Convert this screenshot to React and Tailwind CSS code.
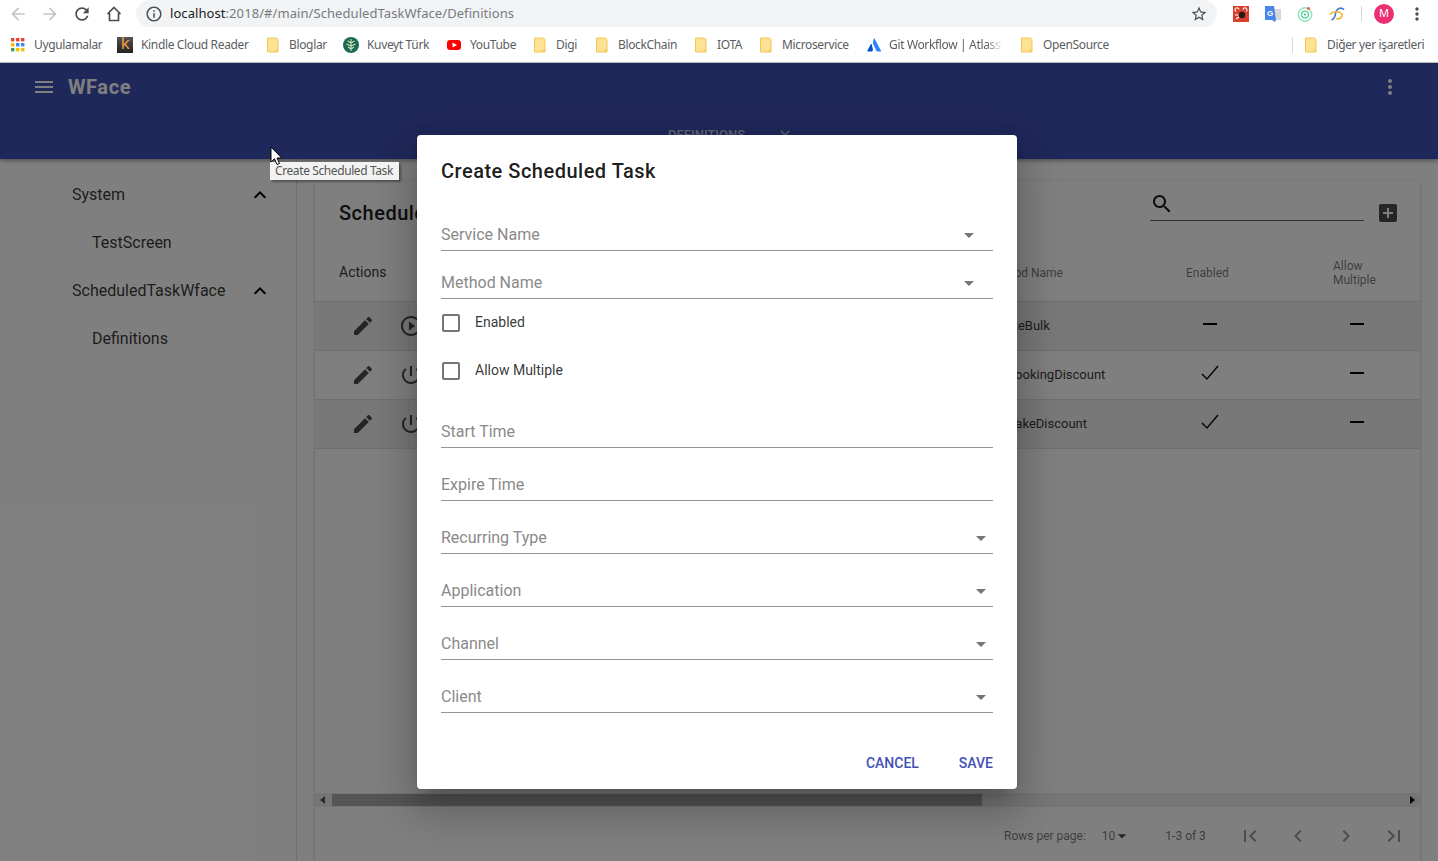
import React from 'react';

const Mi = ({ d, className = '' }) => (
  <svg viewBox="0 0 24 24" className={className} fill="currentColor">
    <path d={d} />
  </svg>
);

const icons = {
  menu: 'M3 18h18v-2H3v2zm0-5h18v-2H3v2zm0-7v2h18V6H3z',
  more: 'M12 8c1.1 0 2-.9 2-2s-.9-2-2-2-2 .9-2 2 .9 2 2 2zm0 2c-1.1 0-2 .9-2 2s.9 2 2 2 2-.9 2-2-.9-2-2-2zm0 6c-1.1 0-2 .9-2 2s.9 2 2 2 2-.9 2-2-.9-2-2-2z',
  less: 'M12 8l-6 6 1.41 1.41L12 10.83l4.59 4.58L18 14z',
  edit: 'M3 17.25V21h3.75L17.81 9.94l-3.75-3.75L3 17.25zM20.71 7.04c.39-.39.39-1.02 0-1.41l-2.34-2.34c-.39-.39-1.02-.39-1.41 0l-1.83 1.83 3.75 3.75 1.83-1.83z',
  play: 'M10 16.5l6-4.5-6-4.5v9zM12 2C6.48 2 2 6.48 2 12s4.48 10 10 10 10-4.48 10-10S17.52 2 12 2zm0 18c-4.41 0-8-3.59-8-8s3.59-8 8-8 8 3.59 8 8-3.59 8-8 8z',
  power: 'M13 3h-2v10h2V3zm4.83 2.17l-1.42 1.42C17.99 7.86 19 9.81 19 12c0 3.87-3.13 7-7 7s-7-3.13-7-7c0-2.19 1.01-4.14 2.58-5.42L6.17 5.17C4.23 6.82 3 9.26 3 12c0 4.97 4.03 9 9 9s9-4.03 9-9c0-2.74-1.23-5.18-3.17-6.83z',
  search: 'M15.5 14h-.79l-.28-.27C15.41 12.59 16 11.11 16 9.5 16 5.91 13.09 3 9.5 3S3 5.91 3 9.5 5.91 16 9.5 16c1.61 0 3.09-.59 4.23-1.57l.27.28v.79l5 4.99L20.49 19l-4.99-5zm-6 0C7.01 14 5 11.99 5 9.5S7.01 5 9.5 5 14 7.01 14 9.5 11.99 14 9.5 14z',
  addBox: 'M19 3H5c-1.11 0-2 .9-2 2v14c0 1.1.89 2 2 2h14c1.1 0 2-.9 2-2V5c0-1.1-.9-2-2-2zm-2 10h-4v4h-2v-4H7v-2h4V7h2v4h4v2z',
  first: 'M18.41 16.59L13.82 12l4.59-4.59L17 6l-6 6 6 6zM6 6h2v12H6z',
  prev: 'M15.41 7.41L14 6l-6 6 6 6 1.41-1.41L10.83 12z',
  next: 'M10 6L8.59 7.41 13.17 12l-4.58 4.59L10 18l6-6z',
  last: 'M5.59 7.41L10.18 12l-4.59 4.59L7 18l6-6-6-6zM16 6h2v12h-2z',
  box: 'M19 5v14H5V5h14m0-2H5c-1.1 0-2 .9-2 2v14c0 1.1.9 2 2 2h14c1.1 0 2-.9 2-2V5c0-1.1-.9-2-2-2z',
  drop: 'M7 10l5 5 5-5z',
  close: 'M19 6.41L17.59 5 12 10.59 6.41 5 5 6.41 10.59 12 5 17.59 6.41 19 12 13.41 17.59 19 19 17.59 13.41 12z',
  back: 'M20 11H7.83l5.59-5.59L12 4l-8 8 8 8 1.41-1.41L7.83 13H20v-2z',
  forward: 'M12 4l-1.41 1.41L16.17 11H4v2h12.17l-5.58 5.59L12 20l8-8z',
  reload: 'M17.65 6.35C16.2 4.9 14.21 4 12 4c-4.42 0-7.99 3.58-7.99 8s3.57 8 7.99 8c3.73 0 6.84-2.55 7.73-6h-2.08c-.82 2.33-3.04 4-5.65 4-3.31 0-6-2.69-6-6s2.69-6 6-6c1.66 0 3.14.69 4.22 1.78L13 11h7V4l-2.35 2.35z',
  info: 'M11 7h2v2h-2zm0 4h2v6h-2zm1-9C6.48 2 2 6.48 2 12s4.48 10 10 10 10-4.48 10-10S17.52 2 12 2zm0 18c-4.41 0-8-3.59-8-8s3.59-8 8-8 8 3.59 8 8-3.59 8-8 8z',
  star: 'M22 9.24l-7.19-.62L12 2 9.19 8.63 2 9.24l5.46 4.73L5.82 21 12 17.27 18.18 21l-1.63-7.03L22 9.24zM12 15.4l-3.76 2.27 1-4.28-3.32-2.88 4.38-.38L12 6.1l1.71 4.04 4.38.38-3.32 2.88 1 4.28L12 15.4z',
};

const Folder = () => (
  <svg viewBox="0 0 16 16" className="w-4 h-4 shrink-0">
    <path d="M2.5 1h9l1.5 1.5V15H2.5z" fill="#fde293" stroke="#f0c755" strokeWidth="1" />
    <path d="M11 15v-2h2" fill="none" stroke="#f0c755" strokeWidth="1" />
  </svg>
);

const AppsGrid = () => (
  <svg viewBox="0 0 14 14" className="w-[14px] h-[14px] shrink-0">
    {[
      ['#ea4335', '#ea4335', '#ea4335'],
      ['#fbbc04', '#4285f4', '#4285f4'],
      ['#34a853', '#fbbc04', '#fbbc04'],
    ].map((row, y) =>
      row.map((color, x) => <rect key={`${x}-${y}`} x={x * 5} y={y * 5} width="3.4" height="3.4" fill={color} />)
    )}
  </svg>
);

const Kindle = () => (
  <span className="w-4 h-4 shrink-0 bg-gradient-to-b from-[#555] to-[#222] text-[#ee9a3a] text-[17px] leading-[14px] text-center font-['Liberation_Sans',sans-serif]">
    k
  </span>
);

const Kuveyt = () => (
  <svg viewBox="0 0 16 16" className="w-4 h-4 shrink-0">
    <circle cx="8" cy="8" r="8" fill="#1d6a52" />
    <path d="M8 2v12M8 6L4.5 4M8 6l3.5-2M8 9L3.5 7M8 9l4.5-2M8 12l-3-2M8 12l3-2" stroke="#cfe0b8" strokeWidth="1.1" fill="none" />
  </svg>
);

const YouTube = () => (
  <svg viewBox="0 0 16 16" className="w-4 h-4 shrink-0">
    <rect x="1" y="3" width="14" height="10" rx="3" fill="#f00" />
    <path d="M6.5 5.5L11 8l-4.5 2.5z" fill="#fff" />
  </svg>
);

const Atlassian = () => (
  <svg viewBox="0 0 16 16" className="w-4 h-4 shrink-0">
    <path d="M8.2 1c-1.6 3-1.6 5.6 0 8.3L10.8 14.5H15.4z" fill="#2684ff" />
    <path d="M4.6 7.4L1 14.5h5.2L7 12.4c-.5-1.6-.9-3.3-1.2-5-.3-.6-.9-.6-1.2 0z" fill="#0052cc" />
  </svg>
);

const bookmarks = [
  { label: 'Uygulamalar', icon: <AppsGrid />, width: 'w-[107px]', gap: 'gap-[9px] pl-[1px]' },
  { label: 'Kindle Cloud Reader', icon: <Kindle />, width: 'w-[148px]', gap: 'gap-2' },
  { label: 'Bloglar', icon: <Folder />, width: 'w-[78px]', gap: 'gap-2' },
  { label: 'Kuveyt Türk', icon: <Kuveyt />, width: 'w-[103px]', gap: 'gap-2' },
  { label: 'YouTube', icon: <YouTube />, width: 'w-[86px]', gap: 'gap-2' },
  { label: 'Digi', icon: <Folder />, width: 'w-[62px]', gap: 'gap-2' },
  { label: 'BlockChain', icon: <Folder />, width: 'w-[99px]', gap: 'gap-2' },
  { label: 'IOTA', icon: <Folder />, width: 'w-[65px]', gap: 'gap-2' },
  { label: 'Microservice', icon: <Folder />, width: 'w-[108px]', gap: 'gap-2' },
];

const BrowserChrome = () => (
  <div className="h-[63px] bg-white border-b border-[#c4c4c4] font-['Noto_Sans',sans-serif]">
    <div className="h-[27px] flex items-center">
      <div className="flex items-center w-[136px] pl-[8px] gap-[12px] text-[#5f6368]">
        <Mi d={icons.back} className="w-5 h-5 text-[#c3c5c8]" />
        <Mi d={icons.forward} className="w-5 h-5 text-[#c3c5c8]" />
        <Mi d={icons.reload} className="w-5 h-5 text-[#4a4d51]" />
        <svg viewBox="0 0 20 20" className="w-5 h-5 text-[#4a4d51]" fill="none" stroke="currentColor" strokeWidth="1.7">
          <path d="M3.5 10L10 3.5 16.5 10M5.5 9v7.5h9V9" />
        </svg>
      </div>
      <div className="w-[1081px] h-[27px] bg-[#f1f3f4] rounded-[14px] flex items-center pl-[9px] pr-[9px]">
        <Mi d={icons.info} className="w-[18px] h-[18px] text-[#4a4d51] shrink-0" />
        <span className="ml-[7px] text-[13px] text-[#777b80] whitespace-nowrap tracking-[0.07px]">
          <span className="text-[#202124]">localhost</span>:2018/#/main/ScheduledTaskWface/Definitions
        </span>
        <Mi d={icons.star} className="ml-auto w-[18px] h-[18px] text-[#4a4d51] shrink-0" />
      </div>
      <div className="flex items-center pl-4 gap-4">
        <svg viewBox="0 0 16 16" className="w-4 h-4">
          <rect width="16" height="16" fill="#d8402c" />
          <circle cx="9" cy="9" r="3.2" fill="#2b1a16" />
          <path d="M3 5.5a2 2 0 1 1 3-2M13 5.5a2 2 0 1 0-3-2M2 9h3.5M3 13l3-2" stroke="#fff" strokeWidth="1.1" fill="none" />
        </svg>
        <svg viewBox="0 0 16 16" className="w-4 h-4">
          <rect x="6" y="3" width="10" height="11" fill="#d5d8dc" />
          <path d="M0 0h9l2 14-1 2-3-2H0z" fill="#4a86e8" />
          <text x="2" y="9.5" fontSize="8" fill="#fff" fontFamily="Liberation Sans" fontWeight="700">G</text>
        </svg>
        <svg viewBox="0 0 16 16" className="w-4 h-4" fill="none">
          <circle cx="8" cy="8.5" r="6.7" stroke="#8fe6c0" strokeWidth="1.5" />
          <circle cx="8" cy="8.5" r="3.4" stroke="#4fd09a" strokeWidth="1.3" />
          <circle cx="8" cy="8.5" r="1" fill="#2bb673" />
          <circle cx="11.5" cy="2.5" r="1.5" fill="#ef5a3c" />
        </svg>
        <svg viewBox="0 0 16 16" className="w-4 h-4" fill="none" strokeWidth="1.7">
          <path d="M15 3.5C11 .5 7 3 6.5 7.5 6.2 10.5 5 13 2.5 14" stroke="#3f7fd0" />
          <path d="M1 8.5C3.5 5.5 8 5.5 11 6.5c2.5.8 3 3.5.5 5.5-1.5 1-3 1-4.5.5" stroke="#f2b632" />
        </svg>
        <div className="w-px h-4 bg-[#d8d8d8]" />
        <div className="w-5 h-5 -ml-[4px] rounded-full bg-[#ec2f72] text-white text-[11px] flex items-center justify-center">M</div>
        <Mi d={icons.more} className="w-5 h-5 text-[#4a4d51] -ml-[3px]" />
      </div>
    </div>
    <div className="h-[35px] flex items-center pl-[10px] text-[12px] text-[#5a5d61] whitespace-nowrap tracking-[-0.35px]">
      {bookmarks.map((b) => (
        <div key={b.label} className={`flex items-center shrink-0 ${b.width} ${b.gap}`}>
          {b.icon}
          <span>{b.label}</span>
        </div>
      ))}
      <div className="flex items-center shrink-0 w-[153px] gap-[7px]">
        <Atlassian />
        <span className="[mask-image:linear-gradient(to_right,black_85%,transparent)]">Git Workflow | Atlassi</span>
      </div>
      <div className="flex items-center shrink-0 w-[273px] gap-2">
        <Folder />
        <span>OpenSource</span>
      </div>
      <div className="w-px h-4 bg-[#d8d8d8] mr-[10px]" />
      <div className="flex items-center gap-2">
        <Folder />
        <span>Diğer yer işaretleri</span>
      </div>
    </div>
  </div>
);

const AppBar = () => (
  <header className="h-[96px] bg-[#3f51b5] text-white relative z-10 shadow-[0_2px_4px_rgba(0,0,0,0.35)]">
    <div className="h-12 flex items-center pl-8 pr-9">
      <Mi d={icons.menu} className="w-6 h-6" />
      <span className="ml-3 text-[20px] font-bold tracking-[0.6px]">WFace</span>
      <Mi d={icons.more} className="ml-auto w-6 h-6" />
    </div>
    <div className="h-12 flex items-center pl-[668px] text-white/70">
      <span className="text-[13px] font-medium uppercase">Definitions</span>
      <Mi d={icons.close} className="ml-[32px] w-4 h-4" />
    </div>
  </header>
);

const sideItems = [
  { label: 'System', group: true },
  { label: 'TestScreen' },
  { label: 'ScheduledTaskWface', group: true },
  { label: 'Definitions' },
];

const Sidebar = () => (
  <aside className="w-[297px] shrink-0 border-r border-[#dcdcdc] pt-[12px] text-[16px] text-black/80">
    {sideItems.map((item) => (
      <div key={item.label} className={`h-12 flex items-center ${item.group ? 'pl-[72px]' : 'pl-[92px]'}`}>
        <span>{item.label}</span>
        {item.group && <Mi d={icons.less} className="ml-auto mr-[24px] w-6 h-6 text-black" />}
      </div>
    ))}
  </aside>
);

const rows = [
  { action: icons.play, method: 'CreateBulk', indent: 'pl-0', enabled: false, bg: 'bg-[#f0f0f0]' },
  { action: icons.power, method: 'BookingDiscount', indent: 'pl-[20px]', enabled: true, bg: 'bg-white' },
  { action: icons.power, method: 'MakeDiscount', indent: 'pl-[17px]', enabled: true, bg: 'bg-[#f0f0f0]' },
];

const Dash = () => <div className="ml-[17px] w-[14px] h-[2px] bg-black -mt-[3px]" />;

const Check = () => (
  <svg viewBox="0 0 18 16" className="ml-[15px] w-[18px] h-4 -mt-[4px]" fill="none" stroke="#111" strokeWidth="1.5">
    <path d="M1 9l5 5L17 1" />
  </svg>
);

const ScheduledTable = () => (
  <section className="flex-1 h-[682px] bg-white rounded-[4px] shadow-[0_1px_3px_rgba(0,0,0,0.3)] flex flex-col">
    <div className="h-16 shrink-0 flex items-center pl-6">
      <h2 className="text-[20px] font-medium text-black/90 tracking-[0.5px]">Scheduled Tasks</h2>
      <div className="ml-auto w-[214px] h-8 mb-4 border-b border-black/60 flex items-start pt-[3px]">
        <Mi d={icons.search} className="w-6 h-6 text-black/90" />
      </div>
      <Mi d={icons.addBox} className="ml-[12px] mr-[20px] w-[24px] h-[24px] text-black/70" />
    </div>
    <div className="h-[57px] shrink-0 grid grid-cols-[672px_199px_147px_87px] items-center border-b border-[#e0e0e0] text-[12px] text-black/55">
      <span className="pl-6 -mt-[2px] text-[14px] text-black/80">Actions</span>
      <span>Method Name</span>
      <span>Enabled</span>
      <span className="leading-[14px]">Allow<br />Multiple</span>
    </div>
    {rows.map((row) => (
      <div key={row.method} className={`h-[49px] shrink-0 grid grid-cols-[672px_199px_147px_87px] items-center border-b border-[#e0e0e0] text-[13px] text-black/80 ${row.bg}`}>
        <div className="pl-9 flex items-center gap-6 text-black/70">
          <Mi d={icons.edit} className="w-6 h-6" />
          <Mi d={row.action} className="w-6 h-6" />
        </div>
        <span className={row.indent}>{row.method}</span>
        <div>{row.enabled ? <Check /> : <Dash />}</div>
        <div><Dash /></div>
      </div>
    ))}
    <div className="flex-1" />
    <div className="h-[14px] shrink-0 bg-[#ececec] flex items-center px-[5px]">
      <div className="w-0 h-0 border-y-[4px] border-y-transparent border-r-[5px] border-r-[#505050]" />
      <div className="ml-[7px] w-[650px] h-3 bg-[#aaaaaa]" />
      <div className="ml-auto w-0 h-0 border-y-[4px] border-y-transparent border-l-[5px] border-l-black" />
    </div>
    <div className="h-14 shrink-0 pt-[1px] flex items-center text-[12px] text-black/55 pl-[689px]">
      <span>Rows per page:</span>
      <span className="ml-[16px]">10</span>
      <Mi d={icons.drop} className="-ml-[3px] w-5 h-5 text-black/70" />
      <span className="ml-[33px]">1-3 of 3</span>
      <div className="ml-[32px] flex gap-6 text-black/40">
        <Mi d={icons.first} className="w-6 h-6" />
        <Mi d={icons.prev} className="w-6 h-6" />
        <Mi d={icons.next} className="w-6 h-6" />
        <Mi d={icons.last} className="w-6 h-6" />
      </div>
    </div>
  </section>
);

const Field = ({ label, select, arrow = 'mr-[12px]', className = '' }) => (
  <div className={`h-8 shrink-0 border-b border-[#949494] flex items-center text-[16px] text-[#8a8a8a] ${className}`}>
    <span>{label}</span>
    {select && <Mi d={icons.drop} className={`ml-auto w-6 h-6 text-[#757575] ${arrow}`} />}
  </div>
);

const CheckRow = ({ label }) => (
  <div className="h-12 shrink-0 flex items-center text-[14px] text-black/80">
    <Mi d={icons.box} className="-ml-[2px] w-6 h-6 text-[#757575]" />
    <span className="ml-[12px] -mt-[2px]">{label}</span>
  </div>
);

const Dialog = () => (
  <div className="absolute left-[417px] top-[135px] w-[600px] h-[654px] bg-white rounded-[4px] shadow-[0_11px_15px_-7px_rgba(0,0,0,0.2),0_24px_38px_3px_rgba(0,0,0,0.14),0_9px_46px_8px_rgba(0,0,0,0.12)] px-6 flex flex-col">
    <h2 className="h-[84px] shrink-0 pt-[21px] text-[20px] leading-[30px] font-medium text-black/90 tracking-[0.5px]">Create Scheduled Task</h2>
    <Field label="Service Name" select arrow="mr-[12px]" />
    <Field label="Method Name" select arrow="mr-[12px]" className="mt-4" />
    <CheckRow label="Enabled" />
    <CheckRow label="Allow Multiple" />
    <Field label="Start Time" className="mt-[21px]" />
    <Field label="Expire Time" className="mt-[21px]" />
    <Field label="Recurring Type" select arrow="mr-0" className="mt-[21px]" />
    <Field label="Application" select arrow="mr-0" className="mt-[21px]" />
    <Field label="Channel" select arrow="mr-0" className="mt-[21px]" />
    <Field label="Client" select arrow="mr-0" className="mt-[21px]" />
    <div className="mt-10 flex justify-end gap-10 text-[14px] font-medium text-[#3f51b5]">
      <span>CANCEL</span>
      <span>SAVE</span>
    </div>
  </div>
);

const TooltipAndCursor = () => (
  <>
    <div className="absolute left-[270px] top-[162px] w-[129px] h-[18px] bg-[#f2f2f2] shadow-[2px_2px_2px_rgba(0,0,0,0.35)] text-[12px] leading-[18px] text-[#555] pl-[5px] font-['Noto_Sans',sans-serif] whitespace-nowrap tracking-[-0.4px]">
      Create Scheduled Task
    </div>
    <svg viewBox="0 0 13 20" className="absolute left-[270px] top-[146px] w-[13px] h-5">
      <path d="M1 1v15l3.5-3.2L7 18.5l2.5-1-2.5-5.5h4.7z" fill="#fff" stroke="#000" strokeWidth="1" />
    </svg>
  </>
);

export default function App() {
  return (
    <div className="relative h-[861px] overflow-hidden bg-white font-['Roboto',sans-serif]">
      <BrowserChrome />
      <AppBar />
      <div className="flex h-[702px] overflow-hidden">
        <Sidebar />
        <main className="flex-1 flex pt-[22px] pl-[18px] pr-[18px]">
          <ScheduledTable />
        </main>
      </div>
      {/* modal backdrop */}
      <div className="absolute inset-x-0 top-[63px] bottom-0 z-20 bg-black/50" />
      <div className="absolute inset-0 z-30 pointer-events-none">
        <Dialog />
        <TooltipAndCursor />
      </div>
    </div>
  );
}
